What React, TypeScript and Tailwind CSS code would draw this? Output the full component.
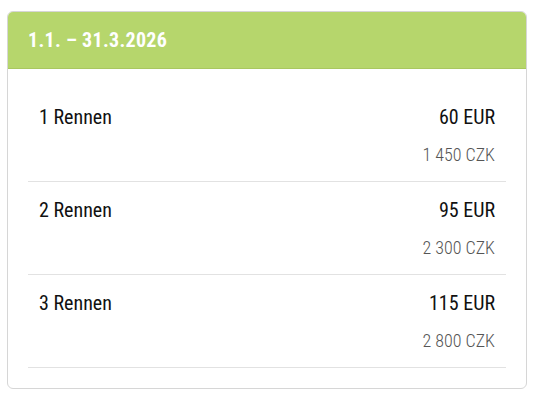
const rows = [
    { label: '1 Rennen', eur: '60 EUR', czk: '1 450 CZK' },
    { label: '2 Rennen', eur: '95 EUR', czk: '2 300 CZK' },
    { label: '3 Rennen', eur: '115 EUR', czk: '2 800 CZK' },
];

export default function App() {
    return (
        <div className="min-h-screen bg-white px-[7px] pt-[11px] font-['Roboto_Condensed',Roboto,sans-serif]">
            <div className="w-[520px] overflow-hidden rounded-md border border-[#d6d6d6] bg-white">
                {/* Header */}
                <div className="flex h-[57px] items-center border-b border-[#a9c760] bg-[#b6d66c] px-5">
                    <span className="text-[20px] leading-6 font-bold tracking-[0.3px] text-white">1.1. – 31.3.2026</span>
                </div>

                {/* Price rows */}
                <div className="p-5">
                    {rows.map((row) => (
                        <div
                            key={row.label}
                            className="flex items-start justify-between border-b border-[#e2e2e2] px-[11px] pb-[15px] pt-4"
                        >
                            <span className="text-[20px] leading-6 text-[#111]">{row.label}</span>
                            <div className="flex flex-col items-end">
                                <span className="text-[20px] leading-6 text-[#111]">{row.eur}</span>
                                <span className="mt-[15px] text-[18px] leading-[22px] font-light text-[#555]">{row.czk}</span>
                            </div>
                        </div>
                    ))}
                </div>
            </div>
        </div>
    );
}
